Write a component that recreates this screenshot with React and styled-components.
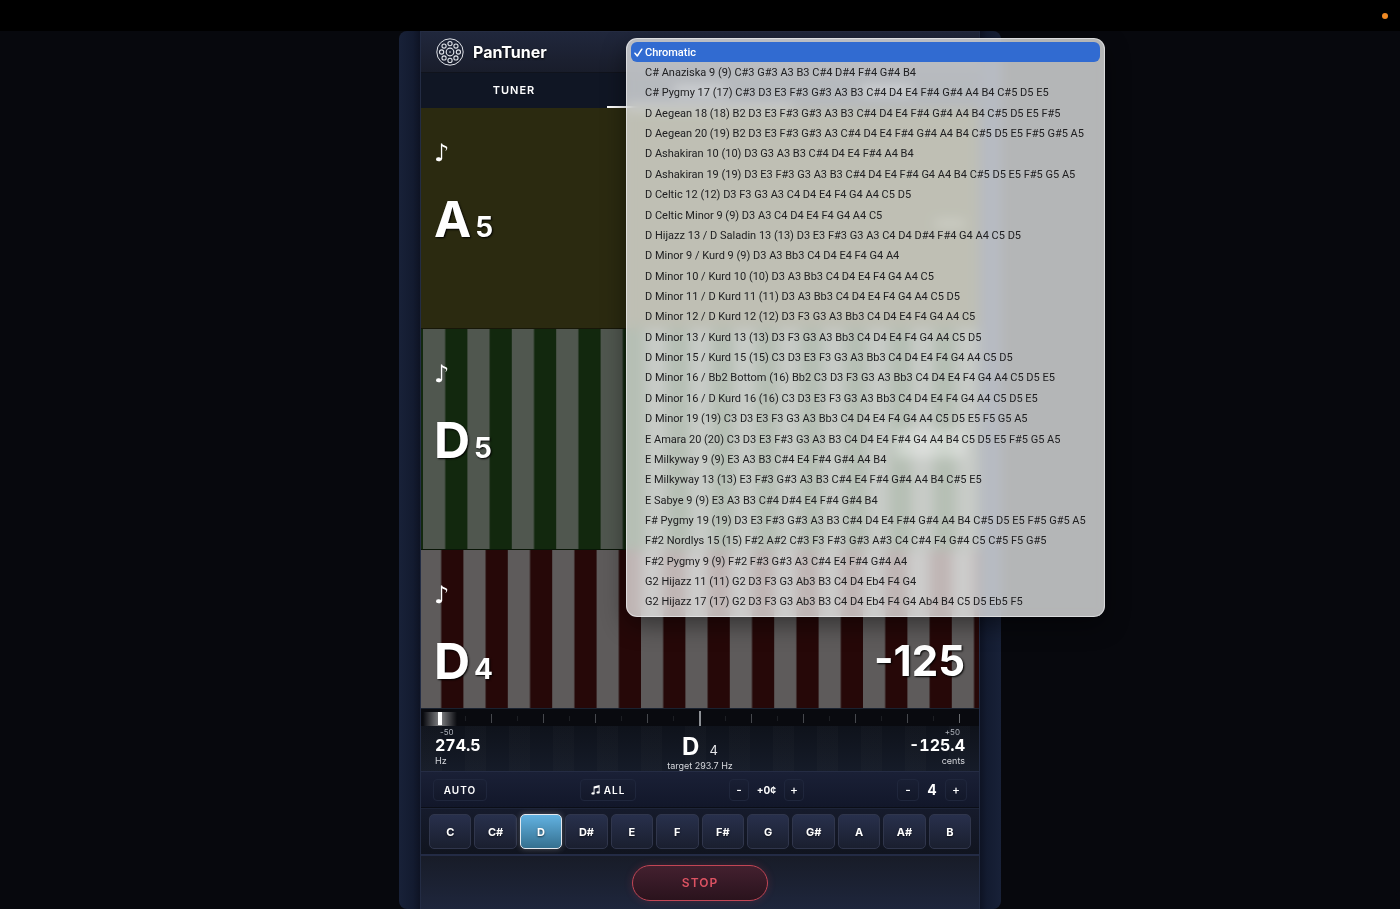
import React, { useState } from 'react';
import styled, { createGlobalStyle } from 'styled-components';

const Global = createGlobalStyle`
  * { box-sizing: border-box; }
  body { margin: 0; background: #07080d; font-family: Inter, "Liberation Sans", sans-serif; color: #fff; }
  button { font-family: inherit; color: inherit; }
`;

const Page = styled.div`
  min-height: 100vh;
  display: flex;
  flex-direction: column;
  overflow: hidden;
`;

const MenuBar = styled.div`
  flex: none;
  height: 31px;
  background: #000;
  display: flex;
  align-items: center;
  justify-content: flex-end;
  padding: 0 12px;
`;

const MicDot = styled.span`
  width: 6px;
  height: 6px;
  border-radius: 50%;
  background: #f08a24;
`;

const Shell = styled.main`
  flex: 1;
  width: 100%;
  max-width: 602px;
  margin: 0 auto;
  padding: 0 21px;
  display: flex;
  flex-direction: column;
  border-radius: 8px;
  background: linear-gradient(90deg, #182138 0, #131b30 14px, #0d1222 22px, #0d1222 580px, #131b30 588px, #182138 602px);
`;

const Screen = styled.div`
  position: relative;
  flex: 1;
  display: flex;
  flex-direction: column;
  background: #12151f;
  border-left: 1px solid #232c44;
  border-right: 1px solid #232c44;
`;

const Header = styled.header`
  height: 42px;
  padding: 0 15px;
  display: flex;
  align-items: center;
  gap: 9px;
  border-top: 1px solid #252c42;
  border-bottom: 1px solid #10131c;
  background: linear-gradient(#20273c, #191d2b);
`;

const Title = styled.h1`
  margin: 0;
  font-size: 16px;
  line-height: 20px;
  font-weight: 700;
  text-shadow: 0 1px 2px #000;
`;

const Tabs = styled.nav`
  display: flex;
  height: 35px;
  background: #101624;
`;

const Tab = styled.button`
  flex: 1;
  display: flex;
  align-items: center;
  justify-content: center;
  border: 0;
  border-bottom: 2px solid ${p => (p.$active ? '#fff' : 'transparent')};
  padding: 0;
  background: none;
  font-size: 11px;
  font-weight: 600;
  letter-spacing: 1px;
`;

const TabMark = styled.span`
  width: 52px;
  height: 6px;
  border-radius: 3px;
  background: rgba(255, 255, 255, 0.6);
`;

const tones = {
  olive: '#2b2a10',
  green: '#12280e',
  red: '#260808',
};

const Strobe = styled.section`
  position: relative;
  height: ${p => (p.$last ? 158 : 221)}px;
  padding: 0 14px 0 13px;
  display: flex;
  flex-direction: column;
  overflow: hidden;
  border-bottom: ${p => (p.$last ? 0 : 1)}px solid rgba(0, 0, 0, 0.45);
  background-color: ${p => tones[p.$tone]};
`;

const Stripes = styled.svg`
  position: absolute;
  inset: 0;
  width: 100%;
  height: 100%;
`;

const Glyph = styled.div`
  position: relative;
  padding-top: 29px;
  height: 82px;
  font-family: "DejaVu Sans", sans-serif;
  font-size: 24px;
  line-height: 32px;
`;

const Reading = styled.div`
  position: relative;
  display: flex;
  align-items: baseline;
  font-weight: 700;
  font-size: 50px;
  line-height: 58px;
  text-shadow: 1px 1px 2px #000;
`;

const Octave = styled.span`
  margin-left: 4px;
  font-size: 28px;
`;

const Cents = styled.output`
  margin-left: auto;
  align-self: flex-start;
  font-size: 42px;
`;

const CentsBar = styled.span`
  margin-left: auto;
  align-self: center;
  width: ${p => (p.$idle ? 30 : 70)}px;
  height: ${p => (p.$idle ? 5 : 28)}px;
  border-radius: 4px;
  background: rgba(255, 255, 255, 0.4);
`;

const Meter = styled.section`
  height: 63px;
  border-top: 1px solid #1a2230;
  background: repeating-linear-gradient(90deg, #ffffff04 0 21px, #00000000 21px 44px), linear-gradient(#0c0f16, #151b28);
`;

const Scale = styled.svg`
  display: block;
  width: 100%;
  height: 17px;
  background: #090a0f;
`;

const Values = styled.div`
  display: grid;
  grid-template-columns: 1fr 1fr 1fr;
  padding: 2px 14px 0;
`;

const Value = styled.div`
  display: flex;
  flex-direction: column;
  align-items: ${p => p.$align};
  font-size: 9px;
  line-height: 10px;
  color: #d5d7dc;
`;

const Edge = styled.span`
  padding: 0 5px;
  font-size: 8px;
  line-height: 9px;
  color: #aeb2ba;
`;

const Number = styled.strong`
  margin-bottom: 3px;
  font-size: 16px;
  line-height: 16px;
  font-weight: 700;
  font-variant-numeric: tabular-nums;
  color: #fff;
`;

const Target = styled.div`
  padding-top: 8px;
  display: flex;
  align-items: baseline;
  gap: 10px;
  font-size: 13px;
  line-height: 21px;
  color: #e6e7ea;
`;

const TargetNote = styled.strong`
  font-size: 24px;
  color: #fff;
`;

const Controls = styled.div`
  height: 37px;
  padding: 0 12px;
  display: flex;
  align-items: center;
  justify-content: space-between;
  border-top: 1px solid #252c44;
  border-bottom: 1px solid #0b0e17;
  background: linear-gradient(#1a2036, #12172a);
`;

const Chip = styled.button`
  height: 22px;
  width: ${p => p.$width}px;
  padding: 0;
  display: flex;
  align-items: center;
  justify-content: center;
  gap: 4px;
  border: 1px solid #1f263c;
  border-radius: 4px;
  background: linear-gradient(#191f34, #13182a);
  font-size: ${p => (p.$symbol ? 12 : 10)}px;
  font-weight: ${p => (p.$symbol ? 500 : 600)};
  letter-spacing: ${p => (p.$symbol ? 0 : 1)}px;
`;

const Stepper = styled.div`
  display: flex;
  align-items: center;
`;

const StepValue = styled.span`
  width: ${p => p.$width}px;
  text-align: center;
  font-size: ${p => p.$size}px;
  font-weight: 700;
`;

const Keys = styled.div`
  height: 48px;
  padding: 5px 8px;
  display: flex;
  gap: 3px;
  border-top: 1px solid #1d2438;
  border-bottom: 2px solid #232b45;
  background: linear-gradient(#161b2c, #10141f);
`;

const Key = styled.button`
  flex: 1;
  min-width: 0;
  padding: 0;
  border: 1px solid ${p => (p.$active ? '#e4e8ee' : '#30364c')};
  border-radius: 5px;
  background: ${p => (p.$active ? 'linear-gradient(#62b2e2, #35708f)' : 'linear-gradient(#28304c, #1a1f2f)')};
  box-shadow: ${p => (p.$active ? '0 0 6px rgba(255,255,255,.25)' : 'none')};
  font-size: 11px;
  font-weight: 700;
  text-shadow: 0 1px 2px rgba(0, 0, 0, 0.6);
`;

const Footer = styled.footer`
  flex: 1;
  min-height: 53px;
  display: flex;
  justify-content: center;
  align-items: center;
  background: linear-gradient(#181c28, #1e263c);
`;

const StopButton = styled.button`
  width: 136px;
  height: 36px;
  border: 1px solid #c24554;
  border-radius: 18px;
  background: linear-gradient(#43202f, #2a131d);
  box-shadow: 0 0 8px rgba(220, 60, 80, 0.2);
  color: #dc5262;
  font-size: 12px;
  font-weight: 600;
  letter-spacing: 1px;
`;

const Menu = styled.ul`
  position: absolute;
  z-index: 5;
  top: 7px;
  left: 205px;
  width: 479px;
  height: 579px;
  margin: 0;
  padding: 3px 4px 4px;
  list-style: none;
  display: flex;
  flex-direction: column;
  border: 1px solid rgba(235, 235, 238, 0.7);
  border-radius: 11px;
  background: rgba(245, 247, 246, 0.73);
  backdrop-filter: blur(6px) saturate(1.4);
  box-shadow: 0 8px 24px rgba(0, 0, 0, 0.45);
`;

const Option = styled.li`
  flex: 1;
  display: flex;
  align-items: center;
  border-radius: 6px;
  white-space: nowrap;
  font-family: Roboto, "Liberation Sans", sans-serif;
  font-size: 11px;
  font-weight: ${p => (p.$selected ? 500 : 400)};
  color: ${p => (p.$selected ? '#fff' : '#202022')};
  background: ${p => (p.$selected ? '#316bd1' : 'none')};
`;

const Mark = styled.span`
  flex: none;
  width: 14px;
  padding-left: 3px;
  display: flex;
`;

const scales = [
  'Chromatic',
  'C# Anaziska 9 (9) C#3 G#3 A3 B3 C#4 D#4 F#4 G#4 B4',
  'C# Pygmy 17 (17) C#3 D3 E3 F#3 G#3 A3 B3 C#4 D4 E4 F#4 G#4 A4 B4 C#5 D5 E5',
  'D Aegean 18 (18) B2 D3 E3 F#3 G#3 A3 B3 C#4 D4 E4 F#4 G#4 A4 B4 C#5 D5 E5 F#5',
  'D Aegean 20 (19) B2 D3 E3 F#3 G#3 A3 C#4 D4 E4 F#4 G#4 A4 B4 C#5 D5 E5 F#5 G#5 A5',
  'D Ashakiran 10 (10) D3 G3 A3 B3 C#4 D4 E4 F#4 A4 B4',
  'D Ashakiran 19 (19) D3 E3 F#3 G3 A3 B3 C#4 D4 E4 F#4 G4 A4 B4 C#5 D5 E5 F#5 G5 A5',
  'D Celtic 12 (12) D3 F3 G3 A3 C4 D4 E4 F4 G4 A4 C5 D5',
  'D Celtic Minor 9 (9) D3 A3 C4 D4 E4 F4 G4 A4 C5',
  'D Hijazz 13 / D Saladin 13 (13) D3 E3 F#3 G3 A3 C4 D4 D#4 F#4 G4 A4 C5 D5',
  'D Minor 9 / Kurd 9 (9) D3 A3 Bb3 C4 D4 E4 F4 G4 A4',
  'D Minor 10 / Kurd 10 (10) D3 A3 Bb3 C4 D4 E4 F4 G4 A4 C5',
  'D Minor 11 / D Kurd 11 (11) D3 A3 Bb3 C4 D4 E4 F4 G4 A4 C5 D5',
  'D Minor 12 / D Kurd 12 (12) D3 F3 G3 A3 Bb3 C4 D4 E4 F4 G4 A4 C5',
  'D Minor 13 / Kurd 13 (13) D3 F3 G3 A3 Bb3 C4 D4 E4 F4 G4 A4 C5 D5',
  'D Minor 15 / Kurd 15 (15) C3 D3 E3 F3 G3 A3 Bb3 C4 D4 E4 F4 G4 A4 C5 D5',
  'D Minor 16 / Bb2 Bottom (16) Bb2 C3 D3 F3 G3 A3 Bb3 C4 D4 E4 F4 G4 A4 C5 D5 E5',
  'D Minor 16 / D Kurd 16 (16) C3 D3 E3 F3 G3 A3 Bb3 C4 D4 E4 F4 G4 A4 C5 D5 E5',
  'D Minor 19 (19) C3 D3 E3 F3 G3 A3 Bb3 C4 D4 E4 F4 G4 A4 C5 D5 E5 F5 G5 A5',
  'E Amara 20 (20) C3 D3 E3 F#3 G3 A3 B3 C4 D4 E4 F#4 G4 A4 B4 C5 D5 E5 F#5 G5 A5',
  'E Milkyway 9 (9) E3 A3 B3 C#4 E4 F#4 G#4 A4 B4',
  'E Milkyway 13 (13) E3 F#3 G#3 A3 B3 C#4 E4 F#4 G#4 A4 B4 C#5 E5',
  'E Sabye 9 (9) E3 A3 B3 C#4 D#4 E4 F#4 G#4 B4',
  'F# Pygmy 19 (19) D3 E3 F#3 G#3 A3 B3 C#4 D4 E4 F#4 G#4 A4 B4 C#5 D5 E5 F#5 G#5 A5',
  'F#2 Nordlys 15 (15) F#2 A#2 C#3 F3 F#3 G#3 A#3 C4 C#4 F4 G#4 C5 C#5 F5 G#5',
  'F#2 Pygmy 9 (9) F#2 F#3 G#3 A3 C#4 E4 F#4 G#4 A4',
  'G2 Hijazz 11 (11) G2 D3 F3 G3 Ab3 B3 C4 D4 Eb4 F4 G4',
  'G2 Hijazz 17 (17) G2 D3 F3 G3 Ab3 B3 C4 D4 Eb4 F4 G4 Ab4 B4 C5 D5 Eb5 F5',
];

const notes = ['C', 'C#', 'D', 'D#', 'E', 'F', 'F#', 'G', 'G#', 'A', 'A#', 'B'];

function Logo() {
  const ring = Array.from({ length: 8 }, (_, i) => (i * Math.PI) / 4);
  return (
    <svg width="28" height="28" viewBox="0 0 28 28" fill="none" stroke="#dfe2e8" aria-hidden="true">
      <circle cx="14" cy="14" r="13.2" strokeWidth="1" />
      <circle cx="14" cy="14" r="3.8" strokeWidth="1.2" />
      <circle cx="14" cy="14" r="0.8" fill="#dfe2e8" stroke="none" />
      {ring.map(a => (
        <circle key={a} cx={14 + 8.4 * Math.cos(a)} cy={14 + 8.4 * Math.sin(a)} r="2.1" strokeWidth="1.1" />
      ))}
    </svg>
  );
}

function Lane({ tone, bar, offset, note, octave, cents, idle, last }) {
  const id = `bars-${note}${octave}`;
  return (
    <Strobe $tone={tone} $last={last}>
      {bar && (
        <Stripes aria-hidden="true">
          <defs>
            <pattern id={id} width="44.4" height="400" x={offset} patternUnits="userSpaceOnUse">
              <rect width="22.2" height="400" fill={bar} />
            </pattern>
          </defs>
          <rect width="100%" height="100%" fill={`url(#${id})`} />
        </Stripes>
      )}
      <Glyph>♪</Glyph>
      <Reading>
        {note}
        <Octave>{octave}</Octave>
        {cents ? <Cents>{cents}</Cents> : <CentsBar $idle={idle} />}
      </Reading>
    </Strobe>
  );
}

function CentsScale() {
  const ticks = Array.from({ length: 21 }, (_, i) => i);
  return (
    <Scale viewBox="0 0 558 17" preserveAspectRatio="none" aria-hidden="true">
      <defs>
        <linearGradient id="glow">
          <stop offset="0" stopColor="#fff" stopOpacity="0" />
          <stop offset="0.5" stopColor="#fff" stopOpacity="0.5" />
          <stop offset="1" stopColor="#fff" stopOpacity="0" />
        </linearGradient>
      </defs>
      {ticks.map(i => {
        const tall = i === 10;
        const major = i % 2 === 0;
        const h = tall ? 15 : major ? 9 : 5;
        return (
          <rect key={i} x={tall ? 278 : 18 + i * 26} y={(17 - h) / 2 + 1} width={tall ? 2 : 1} height={h}
            fill={tall ? '#8d9095' : i === 20 ? '#6a6c70' : major ? '#46484d' : '#1d1f24'} />
        );
      })}
      <rect x="2" y="3" width="34" height="14" fill="url(#glow)" />
      <rect x="17" y="3" width="4" height="13" fill="#fff" />
    </Scale>
  );
}

export default function App() {
  const [scale, setScale] = useState('Chromatic');
  const [key, setKey] = useState('D');
  return (
    <Page>
      <Global />
      <MenuBar><MicDot /></MenuBar>
      <Shell>
        <Screen>
          <Header>
            <Logo />
            <Title>PanTuner</Title>
          </Header>
          <Tabs>
            <Tab>TUNER</Tab>
            <Tab $active aria-label="Strobe"><TabMark /></Tab>
            <Tab aria-label="Spectrum"><TabMark /></Tab>
          </Tabs>
          <Lane tone="olive" note="A" octave="5" idle />
          <Lane tone="green" bar="#50574f" offset="2" note="D" octave="5" />
          <Lane tone="red" bar="#5e5b5b" offset="-2" note="D" octave="4" cents="-125" last />
          <Meter>
            <CentsScale />
            <Values>
              <Value $align="flex-start">
                <Edge>-50</Edge>
                <Number>274.5</Number>
                Hz
              </Value>
              <Value $align="center">
                <Target><TargetNote>D</TargetNote>4</Target>
                target 293.7 Hz
              </Value>
              <Value $align="flex-end">
                <Edge>+50</Edge>
                <Number>-125.4</Number>
                cents
              </Value>
            </Values>
          </Meter>
          <Controls>
            <Chip $width={54}>AUTO</Chip>
            <Chip $width={56}>
              <svg width="9" height="10" viewBox="0 0 9 10" fill="#fff" aria-hidden="true">
                <path d="M2.6 1.4 8.6 0v7.2h-.9V2.6L3.5 3.6v4.6h-.9z" />
                <ellipse cx="2" cy="8.4" rx="1.6" ry="1.2" />
                <ellipse cx="7.1" cy="7.4" rx="1.6" ry="1.2" />
              </svg>
              ALL
            </Chip>
            <Stepper>
              <Chip $symbol $width={20} aria-label="Lower tuning">-</Chip>
              <StepValue $size={10} $width={35}>+0¢</StepValue>
              <Chip $symbol $width={20} aria-label="Raise tuning">+</Chip>
            </Stepper>
            <Stepper>
              <Chip $symbol $width={22} aria-label="Octave down">-</Chip>
              <StepValue $size={14} $width={26}>4</StepValue>
              <Chip $symbol $width={22} aria-label="Octave up">+</Chip>
            </Stepper>
          </Controls>
          <Keys>
            {notes.map(n => (
              <Key key={n} $active={n === key} onClick={() => setKey(n)}>{n}</Key>
            ))}
          </Keys>
          <Footer><StopButton>STOP</StopButton></Footer>
          <Menu role="listbox" aria-label="Scale">
            {scales.map(s => (
              <Option key={s} role="option" aria-selected={s === scale} $selected={s === scale} onClick={() => setScale(s)}>
                <Mark>
                  {s === scale && (
                    <svg width="9" height="9" viewBox="0 0 9 9" fill="none" stroke="#fff" strokeWidth="1.5" strokeLinecap="round" strokeLinejoin="round" aria-hidden="true">
                      <path d="M1 5.2 3.3 8 7.8 1.2" />
                    </svg>
                  )}
                </Mark>
                {s}
              </Option>
            ))}
          </Menu>
        </Screen>
      </Shell>
    </Page>
  );
}
